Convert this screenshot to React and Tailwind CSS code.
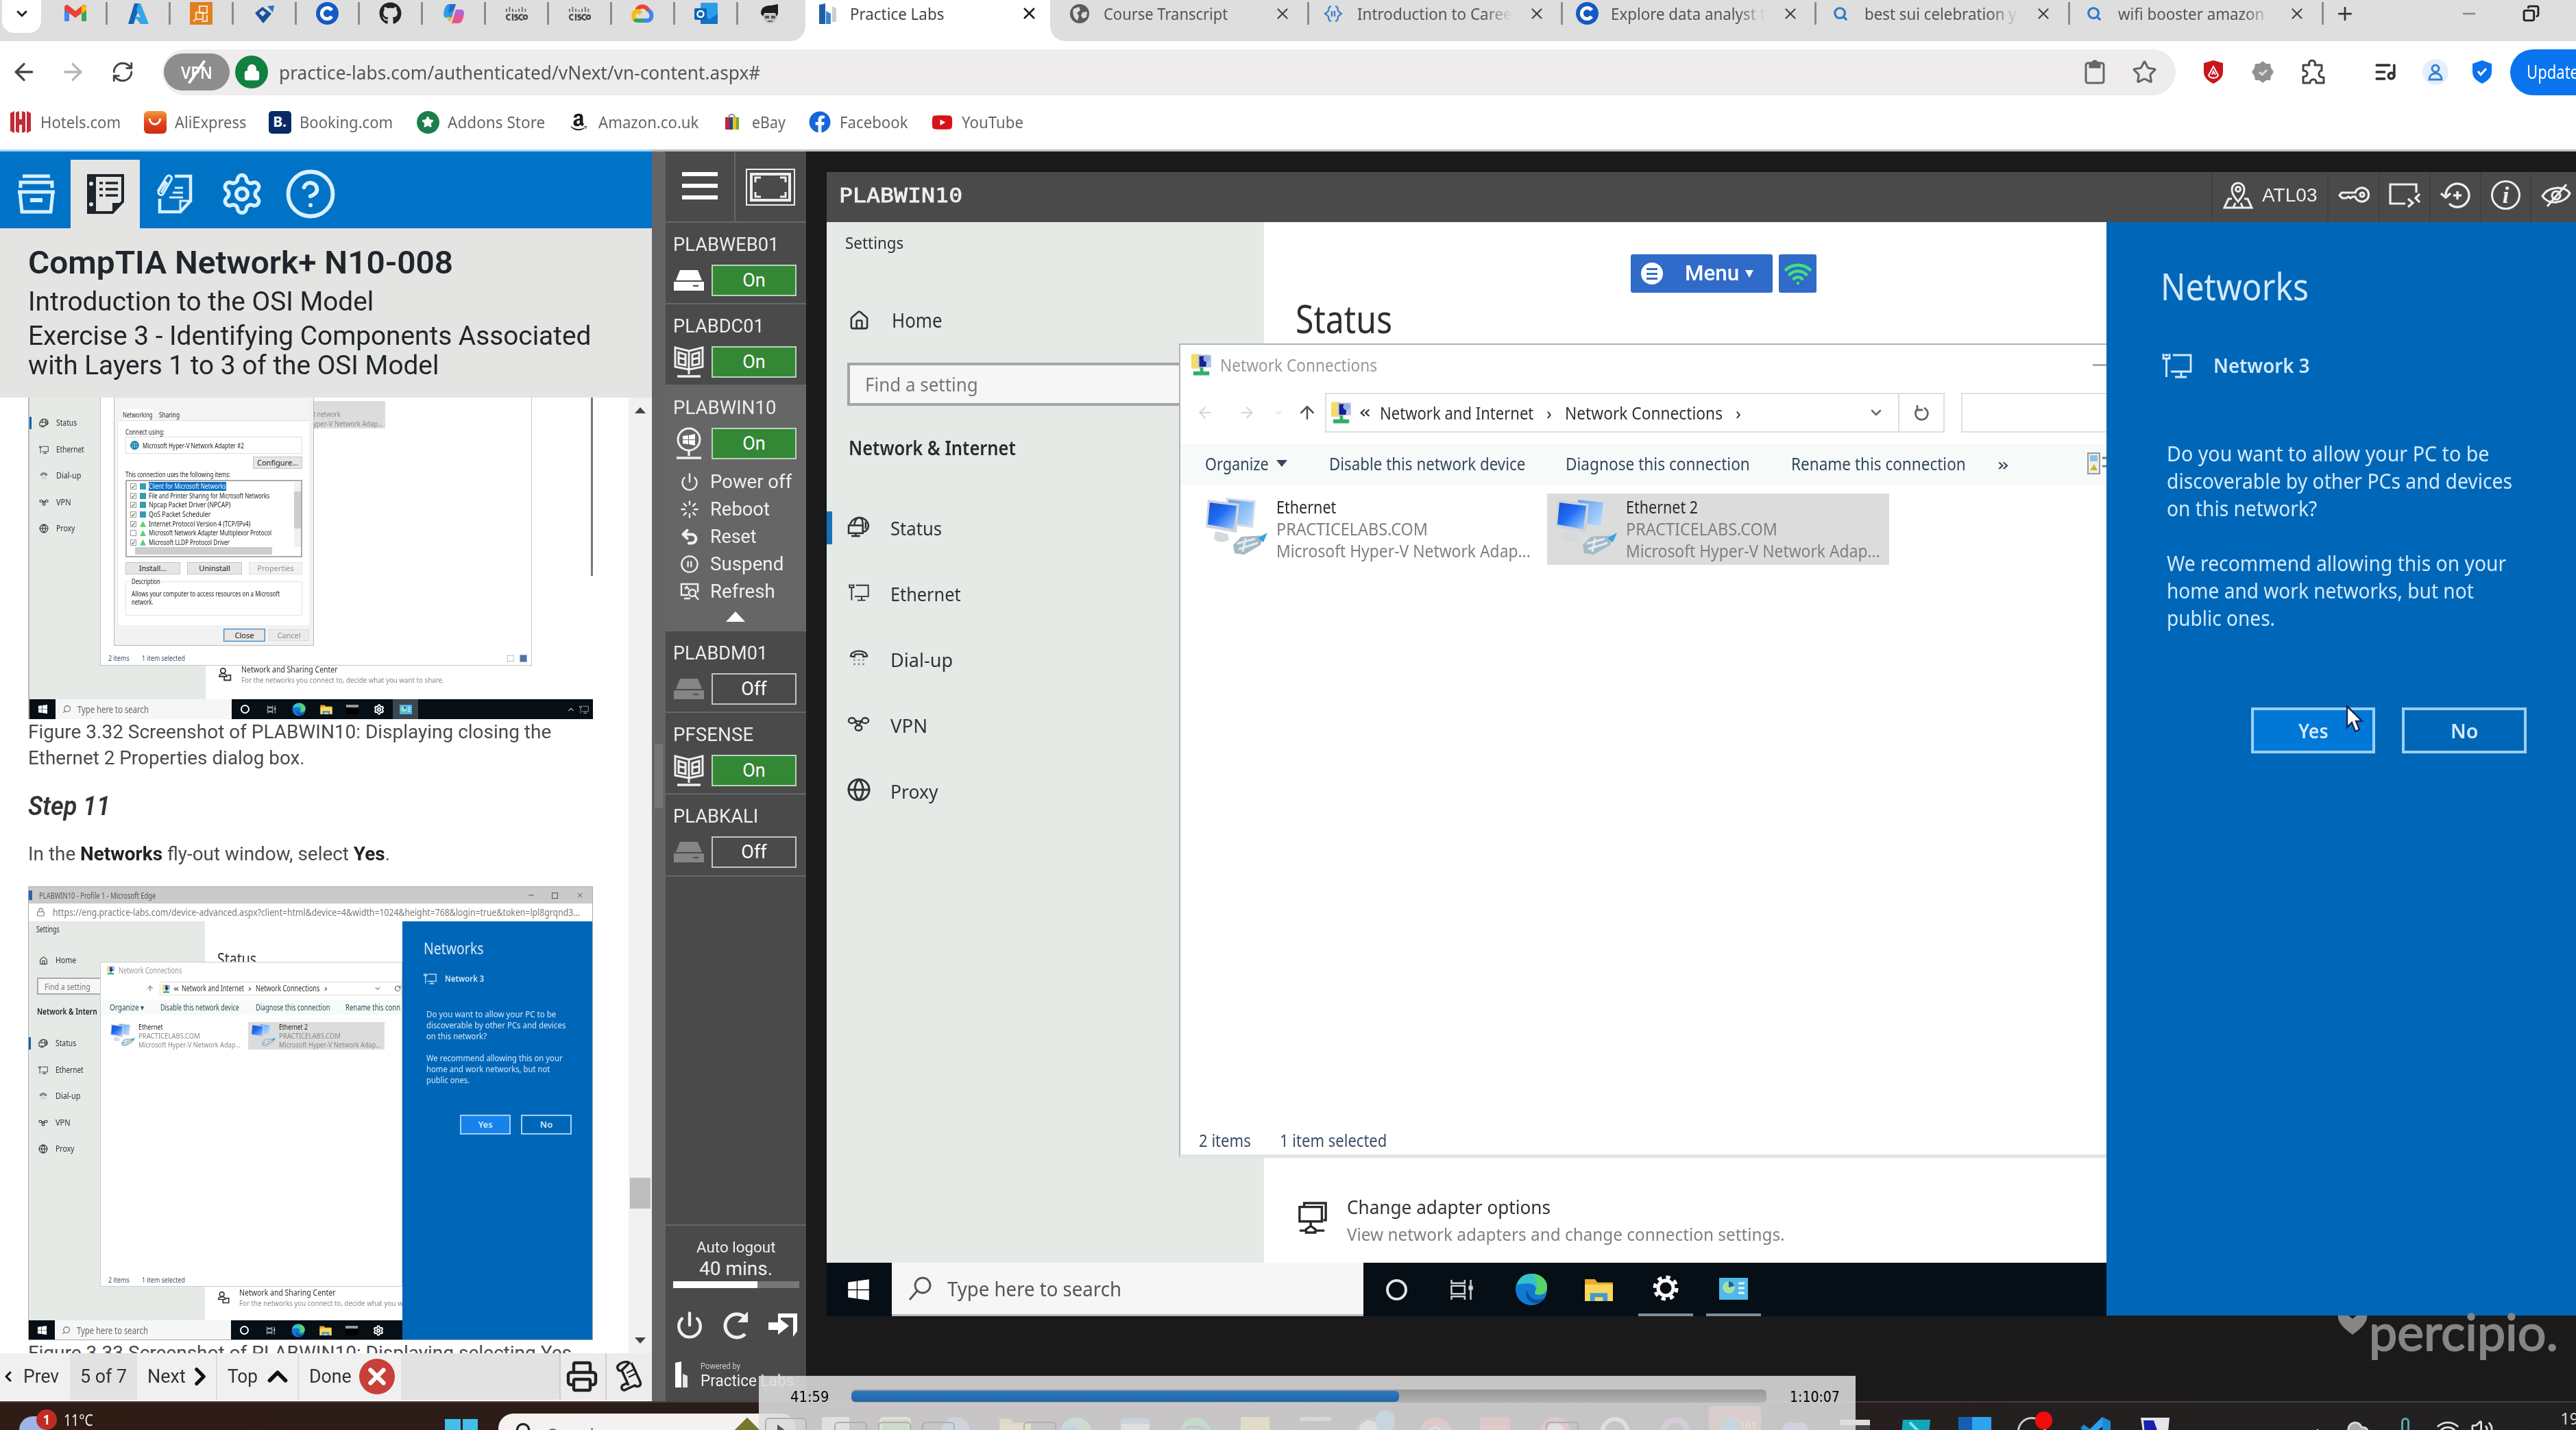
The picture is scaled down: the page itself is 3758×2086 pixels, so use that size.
import React, { useLayoutEffect, useRef, useState } from "react";
import {
  ArrowLeft, ArrowRight, ArrowUp, ChevronDown, ChevronLeft, ChevronRight, ChevronUp, X, Plus, Search, Star,
  ListMusic, House, Globe, Printer, Power, Wifi, Settings, Minus, CircleHelp, Cloud,
  Volume2, Undo2, Loader, CirclePause, Lock, Copy, RotateCw, RefreshCw,
} from "lucide-react";
import { FaGithub, FaFacebook, FaYoutube, FaAmazon, FaSpotify, FaDiscord, FaWindows } from "react-icons/fa";

/* Single line of text condensed or widened to an exact width. */
function T({ w, className = "", children }) {
  const ref = useRef(null);
  const [s, setS] = useState(1);
  useLayoutEffect(() => {
    if (ref.current) setS(w / ref.current.offsetWidth);
  }, [w]);
  return (
    <span className={"inline-block shrink-0 whitespace-nowrap text-left " + className} style={{ width: w }}>
      <span ref={ref} className="inline-block origin-left" style={{ transform: `scaleX(${s})` }}>
        {children}
      </span>
    </span>
  );
}

const Box = ({ className = "", children }) => (
  <div className={"flex shrink-0 items-center justify-center " + className}>{children}</div>
);

/* ---------- brand icons ---------- */
const Gmail = () => (
  <svg className="h-[28px] w-[32px]" viewBox="0 0 32 26">
    <path d="M0 3v21h7V11z" fill="#4285f4" />
    <path d="M32 3v21h-7V11z" fill="#34a853" />
    <path d="M0 4c0-4 4-5 6-3l10 8L26 1c2-2 6-1 6 3v3L16 19 0 7z" fill="#ea4335" />
    <path d="M25 2c3-3 7-1 7 2v4l-7 5z" fill="#fbbc04" />
  </svg>
);
const Azure = () => (
  <svg className="h-[32px] w-[32px]" viewBox="0 0 32 32">
    <path d="M10 1h9L9 31H1z" fill="#1467b3" />
    <path d="M19 1h-3L13 11l6 10-9-1 9 11h12z" fill="#33a5e8" />
  </svg>
);
const Aws = () => (
  <svg className="h-[33px] w-[33px]" viewBox="0 0 33 33">
    <rect width="33" height="33" fill="#e0801f" />
    <g fill="none" stroke="#fbe0bd" strokeWidth="2.2">
      <path d="M14 6h11v10H14zM9 15h10v10H9z" /><path d="M5 28l5-4M17 28h8v-9" />
    </g>
  </svg>
);
const Diamond = () => (
  <svg className="h-[30px] w-[32px]" viewBox="0 0 32 30">
    <path d="M13 5L2 14l12 15 12-14z" fill="#1b4f99" /><path d="M13 10l5 4-5 5-5-5z" fill="#cfdcf0" />
    <path d="M20 4l10-1-2 10z" fill="#2c6fc7" />
  </svg>
);
const Coursera = () => (
  <svg className="h-[33px] w-[33px]" viewBox="0 0 33 33">
    <circle cx="16.500" cy="16.500" r="16.500" fill="#1559c4" />
    <path d="M23 12a8 8 0 1 0 0 9" fill="none" stroke="#fff" strokeWidth="5" />
  </svg>
);
const Copilot = () => (
  <svg className="h-[32px] w-[32px]" viewBox="0 0 32 32">
    <path d="M10 2h9l-6 20H6C0 22 1 16 2 11 4 4 6 2 10 2z" fill="#2f9be0" />
    <path d="M10 2h9l-3 9-8 4z" fill="#2a6cc9" />
    <path d="M22 30h-9l6-20h7c6 0 5 6 4 11-2 7-4 9-8 9z" fill="#e8558c" />
    <path d="M7 20l6 2-1 5c-3 2-6-3-5-7z" fill="#f4b92f" />
    <path d="M19 10h7c5 0 5 4 4 8l-9 1z" fill="#b064d8" />
  </svg>
);
const Cisco = () => (
  <svg className="h-[24px] w-[33px]" viewBox="0 0 36 26">
    <path d="M2 5v5M7 2v8M12 5v5M17 7v3M22 5v5M27 2v8M32 5v5" stroke="#666" strokeWidth="2" />
    <g fill="none" stroke="#4a4a4a" strokeWidth="2.600">
      <path d="M8 15a4 4 0 1 0 0 7M12 13v11M20 15c-6-1-5 3-2 3.500s3 5-3 4M28 15a4 4 0 1 0 0 7" /><circle cx="32" cy="18.500" r="3" />
    </g>
  </svg>
);
const GCloud = () => (
  <svg className="h-[28px] w-[33px]" viewBox="0 0 33 28">
    <g fill="none" strokeWidth="6">
      <path d="M8 9C12 1 22 2 25 10" stroke="#ea4335" /><path d="M25 9c6 3 6 14-1 15h-7" stroke="#4285f4" />
      <path d="M17 24H9c-2 0-4-1-5-3" stroke="#34a853" /><path d="M5 22C1 17 4 10 10 10l4 4" stroke="#fbbc04" />
    </g>
  </svg>
);
const Outlook = () => (
  <svg className="h-[31px] w-[34px]" viewBox="0 0 34 31">
    <rect x="9" width="25" height="31" rx="2" fill="#28a0e8" /><path d="M9 16l13 8 12-8v15H9z" fill="#1272c8" />
    <rect y="8" width="18" height="17" rx="2" fill="#0f63b5" /><circle cx="9" cy="16.500" r="4.500" fill="none" stroke="#fff" strokeWidth="2.500" />
  </svg>
);
const Cap = () => (
  <svg className="h-[30px] w-[30px]" viewBox="0 0 30 30">
    <path d="M5 15h21c0 9-4 14-10.500 14S5 24 5 15z" fill="#c4c4c4" />
    <path d="M2 15C2 5 9 3 17 3l10-2v14l-2 4-2-5H7l-2 5z" fill="#1d1d1d" />
    <path d="M8 18h6v4H8zM17 18h6v4h-6z" fill="#555" /><path d="M12 26h7" stroke="#666" strokeWidth="2" />
  </svg>
);
const PLogo = () => (
  <svg className="h-[32px] w-[30px]" viewBox="0 0 30 32">
    <path d="M2 3l9-2v30H2z" fill="#1f5fa8" /><path d="M12 12l7 4v15h-7z" fill="#3a84cf" /><path d="M21 5l6 3v20h-6z" fill="#c9ced4" />
  </svg>
);
const GlobeDark = () => (
  <svg className="h-[28px] w-[28px]" viewBox="0 0 28 28">
    <circle cx="14" cy="14" r="14" fill="#5b5b5b" /><path d="M5 7l8-3 2 5-5 4 3 4-2 7c-5-3-8-9-6-17zM18 12l7-1-1 8-5 2-3-4z" fill="#dedede" />
  </svg>
);
const Brackets = () => (
  <svg className="h-[26px] w-[28px]" viewBox="0 0 28 26" fill="none" stroke="#4a84c9" strokeWidth="2.500">
    <path d="M11 2C5 3 9 8 6 10l-4 3 4 3c3 2-1 7 5 8M17 2c6 1 2 6 5 8l4 3-4 3c-3 2 1 7-5 8M12 9v8M16 9v8" />
  </svg>
);

/* ---------- browser chrome ---------- */
function Tab({ icon, label, w }) {
  return (
    <div className="flex h-[33px] w-[370px] shrink-0 items-center border-r-[3px] border-[#8b8b8b]">
      <Box className="w-[70px]">{icon}</Box>
      <div className="flex-1 [mask-image:linear-gradient(to_right,black_82%,transparent)]">
        <T w={w} className="text-[24px] leading-[40px] text-[#555]">{label}</T>
      </div>
      <Box className="w-[72px]"><X className="size-[26px] text-[#444]" strokeWidth={2} /></Box>
    </div>
  );
}

function TabStrip() {
  const pinned = [<Gmail />, <Azure />, <Aws />, <Diamond />, <Coursera />, <FaGithub className="size-[33px] text-[#222]" />, <Copilot />, <Cisco />, <Cisco />, <GCloud />, <Outlook />, <Cap />];
  return (
    <div className="flex h-[60px] shrink-0 bg-white">
      <div className="flex h-[60px] w-[1175px] shrink-0 items-start rounded-br-[22px] bg-[#dedede] pl-[3px]">
        <Box className="mr-[5px] h-[48px] w-[57px] rounded-b-[18px] bg-white pb-[8px]"><ChevronDown className="size-[24px] text-[#222]" strokeWidth={3} /></Box>
        {pinned.map((p, i) => (
          <div key={i} className="flex h-[39px] items-center">
            <Box className={i < 11 ? "h-[33px] w-[92px] border-r-[3px] border-[#8b8b8b]" : "h-[33px] w-[92px]"}>{p}</Box>
          </div>
        ))}
      </div>
      <div className="flex h-[39px] w-[357px] shrink-0 items-center">
        <Box className="w-[65px]"><PLogo /></Box>
        <T w={137} className="text-[24px] leading-[40px] text-[#444]">Practice Labs</T>
        <div className="flex-1" />
        <Box className="w-[62px]"><X className="size-[27px] text-[#222]" strokeWidth={2.300} /></Box>
      </div>
      <div className="flex h-[60px] flex-1 items-start rounded-bl-[22px] bg-[#dedede] pl-[8px]">
        <div className="flex h-[39px] items-center">
          <Tab icon={<GlobeDark />} label="Course Transcript" w={181} />
          <Tab icon={<Brackets />} label="Introduction to Caree" w={226} />
          <Tab icon={<Coursera />} label="Explore data analyst t" w={226} />
          <Tab icon={<Search className="size-[22px] text-[#2d7cc9]" strokeWidth={3.500} />} label="best sui celebration y" w={222} />
          <Tab icon={<Search className="size-[22px] text-[#2d7cc9]" strokeWidth={3.500} />} label="wifi booster amazon" w={213} />
          <Box className="w-[62px]"><Plus className="size-[30px] text-[#333]" strokeWidth={2.200} /></Box>
          <Box className="ml-[110px] w-[80px]"><Minus className="size-[28px] text-[#888]" /></Box>
          <Box className="ml-[4px] w-[92px]"><Copy className="size-[25px] -scale-x-100 text-[#222]" strokeWidth={2.800} /></Box>
        </div>
      </div>
    </div>
  );
}

function Toolbar() {
  return (
    <div className="flex h-[90px] shrink-0 items-center">
      <Box className="w-[69px]"><ArrowLeft className="size-[40px] text-[#444]" /></Box>
      <Box className="w-[73px]"><ArrowRight className="size-[40px] text-[#b5b5b5]" /></Box>
      <Box className="w-[73px]"><RefreshCw className="size-[34px] text-[#444]" /></Box>
      <div className="ml-[22px] flex h-[67px] w-[2937px] shrink-0 items-center rounded-full bg-[#eeecec]">
        <Box className="ml-[2px] h-[54px] w-[96px] rounded-full bg-[#8d8d8d]">
          <div className="relative">
            <T w={46} className="text-[25px] font-semibold leading-[40px] text-white">VPN</T>
            <div className="absolute left-[21px] top-0 h-[40px] w-[4px] rotate-[35deg] bg-white" />
          </div>
        </Box>
        <Box className="ml-[8px] size-[48px] rounded-full bg-[#12803f]"><Lock className="size-[25px] fill-white text-white" strokeWidth={2.500} /></Box>
        <T w={702} className="ml-[16px] text-[28px] leading-[44px] text-[#555]">practice-labs.com/authenticated/vNext/vn-content.aspx#</T>
        <div className="flex-1" />
        <Box className="w-[72px]">
          <svg className="h-[36px] w-[30px]" viewBox="0 0 30 36" fill="none" stroke="#666" strokeWidth="3"><rect x="2" y="5" width="26" height="29" rx="3" /><path d="M8 5h4c0-4 6-4 6 0h4v6H8z" fill="#666" /></svg>
        </Box>
        <Box className="mr-[10px] w-[72px]"><Star className="size-[37px] text-[#666]" /></Box>
      </div>
      <Box className="ml-[19px] w-[72px]">
        <svg className="h-[34px] w-[30px]" viewBox="0 0 30 34"><path d="M15 0l14 4v13c0 8-6 13-14 17C7 30 1 25 1 17V4z" fill="#c8171c" /><path d="M8 22l7-13 7 13c-2 5-11 5-14 0zM13 21l2-5 3 5" fill="none" stroke="#fff" strokeWidth="2" /></svg>
      </Box>
      <Box className="w-[72px]">
        <svg className="size-[32px]" viewBox="0 0 32 32"><path d="M16 0l5 4 6 0 1 6 4 6-4 6-1 6-6 0-5 4-5-4-6 0-1-6-4-6 4-6 1-6 6 0z" fill="#919191" /><path d="M11 16l4 4 7-7" fill="none" stroke="#ddd" strokeWidth="3" /></svg>
      </Box>
      <Box className="w-[76px]">
        <svg className="h-[38px] w-[36px]" viewBox="0 0 36 38" fill="none" stroke="#444" strokeWidth="3" strokeLinejoin="round"><path d="M3 9h9c-3-9 11-9 8 0h10v8c-2 0-4 2-4 5s2 5 7 5v8H22c1-7-9-7-9 0H3v-9c8 0 8-9 0-9z" /></svg>
      </Box>
      <div className="ml-[14px] h-[32px] w-[2px] bg-[#ccc]" />
      <Box className="ml-[14px] w-[78px]"><ListMusic className="size-[34px] text-[#333]" strokeWidth={2.600} /></Box>
      <Box className="w-[68px]">
        <Box className="size-[38px] rounded-full bg-[#e3effc]"><svg className="size-[28px]" viewBox="0 0 28 28" fill="none" stroke="#3a7fd6" strokeWidth="3"><circle cx="14" cy="9" r="5" /><path d="M5 25c0-12 18-12 18 0z" /></svg></Box>
      </Box>
      <Box className="w-[68px]">
        <svg className="h-[34px] w-[30px]" viewBox="0 0 30 34"><path d="M15 0l14 5v12c0 8-6 13-14 17C7 30 1 25 1 17V5z" fill="#0b72ee" /><path d="M9 16l4 5 8-9" fill="none" stroke="#fff" strokeWidth="3" /></svg>
      </Box>
      <div className="ml-[7px] flex h-[67px] flex-1 items-center rounded-l-[34px] bg-[#0a74f0] pl-[24px]">
        <T w={76} className="text-[27px] leading-[40px] text-white">Update</T>
      </div>
    </div>
  );
}

function Mark({ icon, iw, label, w }) {
  return (
    <div className="flex items-center">
      <Box className={iw}>{icon}</Box>
      <T w={w} className="text-[24px] leading-[40px] text-[#666]">{label}</T>
    </div>
  );
}
function Bookmarks() {
  return (
    <div className="mb-[12px] flex h-[56px] shrink-0 items-center">
      <Mark iw="ml-[1px] w-[58px]" label="Hotels.com" w={117} icon={<svg className="h-[32px] w-[30px]" viewBox="0 0 30 32" fill="#c22a36"><path d="M0 3l6-3v32l-6-3zM8 2l5-2v12h4V0l5 2v28l-5 2V20h-4v12l-5-2zM24 0l6 3v26l-6 3z" /></svg>} />
      <Mark iw="ml-[21px] w-[58px]" label="AliExpress" w={104} icon={<Box className="size-[33px] rounded-[6px] bg-linear-to-b from-[#f29a3a] via-[#e0451f] to-[#cf2a10]"><svg className="size-[22px]" viewBox="0 0 22 22"><path d="M3 6c2 11 14 11 16 0" fill="none" stroke="#fff" strokeWidth="3" /></svg></Box>} />
      <Mark iw="ml-[20px] w-[58px]" label="Booking.com" w={136} icon={<Box className="size-[33px] rounded-[5px] bg-[#0a2a66] text-[21px] font-bold text-white">B.</Box>} />
      <Mark iw="ml-[22px] w-[58px]" label="Addons Store" w={142} icon={<Box className="size-[33px] rounded-full bg-[#1b7f4c]"><Star className="size-[18px] fill-white text-white" /></Box>} />
      <Mark iw="ml-[20px] w-[58px]" label="Amazon.co.uk" w={146} icon={<FaAmazon className="size-[28px] text-[#1b1b1b]" />} />
      <Mark iw="ml-[20px] w-[58px]" label="eBay" w={49} icon={<svg className="h-[26px] w-[22px]" viewBox="0 0 22 26"><path d="M1 6h6v18H1z" fill="#c9243a" /><path d="M7 6h5v18H7z" fill="#27489a" /><path d="M12 6h5v18h-5z" fill="#e7c51c" /><path d="M17 6h4v18h-4z" fill="#7aa72f" /><path d="M6 7c0-7 9-7 9 0" fill="none" stroke="#888" strokeWidth="2" /></svg>} />
      <Mark iw="ml-[21px] w-[58px]" label="Facebook" w={100} icon={<FaFacebook className="size-[32px] text-[#1566dd]" />} />
      <Mark iw="ml-[20px] w-[58px]" label="YouTube" w={90} icon={<FaYoutube className="size-[31px] text-[#d8121a]" />} />
    </div>
  );
}

/* ---------- thumbnails in the lab guide ---------- */
const Pc = ({ className = "" }) => (
  <svg className={className} viewBox="0 0 90 88">
    <defs>
      <linearGradient id="scr" x1="0" y1="0" x2="1" y2="1"><stop offset="0" stopColor="#1a4fd0" /><stop offset=".45" stopColor="#1f6df2" /><stop offset="1" stopColor="#a9d4ff" /></linearGradient>
      <linearGradient id="scr2" x1="0" y1="0" x2="1" y2="1"><stop offset="0" stopColor="#5c9df0" /><stop offset="1" stopColor="#bfe0ff" /></linearGradient>
    </defs>
    <path d="M29 1l44 4-4 40-34-4z" fill="#d9dde2" /><path d="M33 4l37 4-4 34-30-4z" fill="url(#scr2)" />
    <path d="M3 4l46 6-4 42-45-8z" fill="#cfd4da" /><path d="M6 8l39 5-4 34-38-7z" fill="url(#scr)" />
    <path d="M14 50l18 4 2 8c-6 6-20 4-22-2z" fill="#d6d9da" />
    <path d="M40 70l12-12 32-2-4 14-24 14-14-2z" fill="#a5b9c6" /><path d="M46 68l26-7M48 76l28-9M58 60l-4 20" stroke="#e3ebf0" strokeWidth="3" /><path d="M76 60l14-8-6 14z" fill="#2fa6e0" />
  </svg>
);
const NetIcon = ({ className = "" }) => (
  <svg className={className} viewBox="0 0 32 34">
    <rect x="1" y="1" width="15" height="22" fill="#f1dc6d" /><path d="M11 2h20v19H11z" fill="#b9c4e4" /><path d="M13 4h12l-2 16H13z" fill="#16208f" /><circle cx="24" cy="8" r="5" fill="#8fb0e8" />
    <path d="M14 21h5v6h9v6H4v-6h10z" fill="#2fae6b" />
  </svg>
);
const MonitorPlug = ({ className = "" }) => (
  <svg className={className} viewBox="0 0 44 38" fill="none" stroke="currentColor" strokeWidth="2.800">
    <path d="M16 4h26v24H13M28 28v7M19 36h17M2 2v7h9V2M6.500 9v27M4 4h5" />
  </svg>
);
const StatusGlobe = ({ className = "" }) => (
  <svg className={className} viewBox="0 0 32 30" fill="none" stroke="currentColor" strokeWidth="2.500">
    <path d="M4 12C8-2 28-1 30 13c0 5-3 8-7 9M10 12c1-6 3-10 7-10M22 12c0-6-2-10-5-10M26 8v10" /><rect x="2" y="13" width="20" height="11" /><path d="M12 24v4M6 28h12" />
  </svg>
);
const DialUp = ({ className = "" }) => (
  <svg className={className} viewBox="0 0 32 28" fill="none" stroke="currentColor" strokeWidth="2.500">
    <path d="M3 11C4 0 28 0 29 11l-6 1-1-4H10l-1 4z" /><path d="M9 16v2M16 16v2M23 16v2M9 22v3M16 22v3M23 22v3" opacity=".6" />
  </svg>
);
const VpnIcon = ({ className = "" }) => (
  <svg className={className} viewBox="0 0 34 22" fill="none" stroke="currentColor" strokeWidth="2.500">
    <ellipse cx="7" cy="6" rx="5" ry="4" /><ellipse cx="27" cy="6" rx="5" ry="4" /><ellipse cx="17" cy="17" rx="5" ry="4" /><path d="M12 6c3 0 5 3 9 0M22 7l-5 6M12 8l4 5" />
  </svg>
);
const EdgeIcon = ({ className = "" }) => (
  <svg className={className} viewBox="0 0 50 50">
    <circle cx="25" cy="25" r="24" fill="#1279d0" /><path d="M2 20C6 6 14 1 25 1c16 0 24 11 24 20 0 8-6 12-12 12-5 0-8-2-6-5 3-6-1-12-10-12S5 16 2 20z" fill="#35c1c9" />
    <path d="M28 1c14 2 21 11 21 20 0 8-6 12-12 12-5 0-8-2-6-5C38 18 30 6 28 1z" fill="#5bd36a" /><path d="M18 26c-4 10 4 21 16 20 5-1 9-4 12-8-12 5-20 2-24-4-2-3-3-6-4-8z" fill="#0b4f9e" />
  </svg>
);
const FolderIcon = ({ className = "" }) => (
  <svg className={className} viewBox="0 0 44 36">
    <path d="M1 2h15l4 5h23v28H1z" fill="#e8a92c" /><path d="M1 10h42v25H1z" fill="#fbd65c" /><path d="M9 35V23h26v12h-7v-6H16v6z" fill="#3c9bd3" />
  </svg>
);
const Panel = ({ className = "" }) => (
  <svg className={className} viewBox="0 0 42 32"><rect width="42" height="32" fill="#4fb9ec" /><circle cx="14" cy="14" r="9" fill="#a8e0a0" /><path d="M14 14V5a9 9 0 0 1 8 7z" fill="#1d5c9c" /><path d="M28 8h9M28 15h9M28 22h9" stroke="#e4f6ff" strokeWidth="3" /></svg>
);

function MiniItem({ icon, label, w, h, active }) {
  return (
    <div className={"flex shrink-0 items-center text-[#333] " + h}>
      <div className={active ? "h-[18px] w-[3px] bg-[#0f62ad]" : "h-[18px] w-[3px]"} />
      <Box className="w-[36px]">{icon}</Box>
      <T w={w} className="text-[12px] leading-[18px]">{label}</T>
    </div>
  );
}
const MiniItems = ({ h }) => (
  <>
    <MiniItem h={h} active label="Status" w={30} icon={<StatusGlobe className="size-[14px]" />} />
    <MiniItem h={h} label="Ethernet" w={41} icon={<MonitorPlug className="size-[14px]" />} />
    <MiniItem h={h} label="Dial-up" w={36} icon={<DialUp className="size-[12px]" />} />
    <MiniItem h={h} label="VPN" w={22} icon={<VpnIcon className="size-[14px]" />} />
    <MiniItem h={h} label="Proxy" w={27} icon={<Globe className="size-[14px]" />} />
  </>
);
function MiniTaskbar({ tray }) {
  return (
    <div className="flex h-[29px] shrink-0 items-center bg-[#060e16]">
      <Box className="w-[38px]"><FaWindows className="size-[15px] text-white" /></Box>
      <div className="flex h-[29px] w-[257px] items-center bg-[#f6f6f6]">
        <Box className="w-[32px]"><Search className="size-[13px] -scale-x-100 text-[#666]" /></Box>
        <T w={104} className="text-[14px] leading-[20px] text-[#666]">Type here to search</T>
      </div>
      <Box className="w-[38px]"><div className="size-[13px] rounded-full border-2 border-white" /></Box>
      <Box className="w-[39px]"><TaskView className="h-[12px] w-[14px]" /></Box>
      <Box className="w-[42px]"><EdgeIcon className="size-[20px]" /></Box>
      <Box className="w-[38px]"><FolderIcon className="h-[16px] w-[18px]" /></Box>
      <Box className="w-[38px]"><div className="h-[14px] w-[18px] border-t-4 border-[#999] bg-black" /></Box>
      <Box className="w-[40px]"><Settings className="size-[16px] text-white" strokeWidth={3} /></Box>
      {tray && (
        <>
          <Box className="h-[29px] w-[37px] bg-[#3b464f]"><Panel className="h-[14px] w-[18px]" /></Box>
          <div className="flex-1" />
          <ChevronUp className="size-[14px] text-[#aaa]" />
          <MonitorPlug className="ml-[5px] mr-[6px] size-[14px] text-[#aaa]" />
        </>
      )}
    </div>
  );
}
const TaskView = ({ className = "" }) => (
  <svg className={className} viewBox="0 0 34 32" fill="none" stroke="#c9ced3" strokeWidth="2.600"><path d="M2 1v5h20V1M2 31v-5h20v5" /><rect x="2" y="10" width="20" height="12" /><path d="M31 1v30" /><path d="M29 11h4v4h-4z" fill="#fff" /></svg>
);

const protocols = [
  ["Client for Microsoft Networks", 113], ["File and Printer Sharing for Microsoft Networks", 176], ["Npcap Packet Driver (NPCAP)", 119],
  ["QoS Packet Scheduler", 90], ["Internet Protocol Version 4 (TCP/IPv4)", 148], ["Microsoft Network Adapter Multiplexor Protocol", 179], ["Microsoft LLDP Protocol Driver", 118],
];
const miniBtn = "flex shrink-0 items-center justify-center border border-[#c4c4c4] bg-[#e6e6e6] text-[11px] leading-[14px] text-[#222] ";

function ShotOne() {
  return (
    <div className="relative flex h-[469px] w-[824px] shrink-0 flex-col overflow-hidden border-l-2 border-[#b5b9b6] bg-white">
      <div className="flex h-[440px] shrink-0">
        <div className="w-[257px] bg-[#e5eae6] pt-[18px]"><MiniItems h="h-[38.500px]" /></div>
        <div className="flex flex-1 flex-col justify-end pb-[21px] pl-[18px]">
          <div className="flex items-center gap-[12px]">
            <NodeIcon className="size-[22px] text-[#333]" />
            <div className="flex flex-col">
              <T w={141} className="text-[12px] leading-[15px] text-[#333]">Network and Sharing Center</T>
              <T w={296} className="text-[11px] leading-[15px] text-[#888]">For the networks you connect to, decide what you want to share.</T>
            </div>
          </div>
        </div>
      </div>
      <MiniTaskbar tray />
      <div className="absolute right-0 top-0 h-[260px] w-[3px] bg-[#777]" />
      <div className="absolute left-[103px] top-0 flex h-[391px] w-[630px] flex-col border border-t-0 border-[#c5c5c5] bg-white">
        <div className="ml-[310px] mt-[5px] h-[40px] w-[105px] bg-[#dcdcdc] pt-[12px] text-[11px] leading-[14px] text-[#888]">
          <div className="flex flex-col">
            <T w={40}>t network</T>
            <T w={102}>yper-V Network Adap...</T>
          </div>
        </div>
        <div className="flex-1" />
        <div className="flex h-[20px] items-center gap-[18px] pl-[11px] text-[#3c4d66]">
          <T w={31} className="text-[11px] leading-[16px]">2 items</T>
          <T w={63} className="text-[11px] leading-[16px]">1 item selected</T>
          <div className="flex-1" />
          <div className="h-[9px] w-[10px] border border-dotted border-[#888]" />
          <div className="-ml-[10px] mr-[6px] h-[11px] w-[11px] border border-[#8cb4e0] bg-[#51749c]" />
        </div>
      </div>
      <div className="absolute left-[123px] top-0 flex h-[362px] w-[292px] flex-col border border-t-0 border-[#b9b9b9] bg-[#f2f2f2]">
        <div className="mx-[6px] flex h-[332px] flex-col bg-white px-[10px]">
          <div className="-mx-[10px] flex h-[34px] items-end gap-[9px] border-b border-[#ddd] bg-[#f4f4f4] px-[6px]">
            <T w={44} className="bg-white text-[11px] leading-[16px] text-[#222]">Networking</T>
            <T w={30} className="text-[11px] leading-[16px] text-[#222]">Sharing</T>
          </div>
          <T w={57} className="mt-[8px] text-[11px] leading-[15px] text-[#222]">Connect using:</T>
          <div className="flex h-[25px] items-center border border-[#ddd] text-[#222]">
            <Box className="w-[24px]"><Globe className="size-[13px] text-[#1c86ad]" strokeWidth={4} /></Box>
            <T w={148} className="text-[11px] leading-[16px]">Microsoft Hyper-V Network Adapter #2</T>
          </div>
          <div className={miniBtn + "mt-[4px] h-[18px] w-[72px] self-end"}>Configure...</div>
          <T w={153} className="text-[11px] leading-[16px] text-[#222]">This connection uses the following items:</T>
          <div className="flex h-[113px] flex-col border-2 border-[#aaa] pt-[1px]">
            {protocols.map(([label, w], i) => (
              <div key={label} className="flex h-[13.600px] shrink-0 items-center text-[#222]">
                <Box className="mx-[5px] size-[9px] border border-[#999] text-[9px] leading-[9px]">{i === 5 ? "" : "✓"}</Box>
                <div className={i < 4 ? "mr-[4px] size-[9px] bg-[#3a9ab4]" : "mr-[4px] h-[9px] w-[9px] bg-[#5cd06c] [clip-path:polygon(50%_0,100%_100%,0_100%)]"} />
                <T w={w} className={i === 0 ? "bg-[#0f70c4] text-[10px] leading-[13px] text-white" : "text-[10px] leading-[13px]"}>{label}</T>
                <div className="flex-1" />
                <div className={i > 0 && i < 5 ? "h-[13.600px] w-[10px] bg-[#cdcdcd]" : "h-[13.600px] w-[10px] bg-[#f0f0f0]"} />
              </div>
            ))}
            <div className="mx-[12px] h-[11px] w-[200px] bg-[#cdcdcd]" />
          </div>
          <div className="mt-[7px] flex justify-between">
            <div className={miniBtn + "h-[18px] w-[80px]"}>Install...</div>
            <div className={miniBtn + "h-[18px] w-[80px]"}>Uninstall</div>
            <div className={miniBtn + "h-[18px] w-[78px] opacity-50"}>Properties</div>
          </div>
          <div className="mt-[10px] flex h-[50px] flex-col border border-[#e2e2e2] px-[8px]">
            <T w={42} className="-mt-[8px] bg-white text-[10px] leading-[14px] text-[#222]">Description</T>
            <T w={216} className="mt-[5px] text-[10px] leading-[12px] text-[#222]">Allows your computer to access resources on a Microsoft</T>
            <T w={32} className="text-[10px] leading-[12px] text-[#222]">network.</T>
          </div>
        </div>
        <div className="flex justify-end gap-[6px] pr-[6px] pt-[6px]">
          <div className={miniBtn + "h-[17px] w-[59px] outline outline-[#2a8ad4]"}>Close</div>
          <div className={miniBtn + "h-[17px] w-[59px] opacity-50"}>Cancel</div>
        </div>
      </div>
    </div>
  );
}
const NodeIcon = ({ className = "" }) => (
  <svg className={className} viewBox="0 0 24 24" fill="none" stroke="currentColor" strokeWidth="2"><circle cx="8" cy="6" r="4" /><path d="M2 15c0-6 12-6 12 0zM10 15v6h10v-8h-5" /></svg>
);

function MiniConn({ label, sel }) {
  return (
    <div className={sel ? "flex h-[40px] w-[199px] bg-[#dcdcdc] pl-[4px]" : "flex h-[40px] w-[199px] pl-[4px]"}>
      <Pc className="mr-[5px] h-[38px] w-[36px]" />
      <div className="flex flex-col text-[#888]">
        <T w={sel ? 42 : 36} className="text-[11px] leading-[13px] text-[#222]">{label}</T>
        <T w={90} className="text-[11px] leading-[13px]">PRACTICELABS.COM</T>
        <T w={149} className="text-[11px] leading-[13px]">Microsoft Hyper-V Network Adap...</T>
      </div>
    </div>
  );
}
function ShotTwo() {
  return (
    <div className="relative flex h-[662px] w-[824px] shrink-0 flex-col overflow-hidden border border-[#aaa] bg-white">
      <div className="flex h-[24px] shrink-0 items-center bg-[#cacaca]">
        <div className="mr-[10px] h-[14px] w-[5px] bg-[#2b62a8]" />
        <T w={170} className="text-[13px] leading-[20px] text-[#555]">PLABWIN10 - Profile 1 - Microsoft Edge</T>
        <div className="flex-1" />
        <Minus className="mr-[24px] size-[12px] text-[#555]" /><div className="mr-[26px] size-[9px] border border-[#555]" /><X className="mr-[12px] size-[12px] text-[#555]" />
      </div>
      <div className="flex h-[26px] shrink-0 items-center pb-[2px]">
        <Box className="w-[35px]"><Lock className="size-[13px] text-[#777]" /></Box>
        <T w={769} className="text-[15px] leading-[22px] text-[#777]">https://eng.practice-labs.com/device-advanced.aspx?client=html&amp;device=4&amp;width=1024&amp;height=768&amp;login=true&amp;token=lpl8grqnd3...</T>
      </div>
      <div className="flex h-[582px] shrink-0">
        <div className="flex w-[257px] flex-col bg-[#e5eae6] pt-[3px]">
          <T w={34} className="ml-[11px] text-[12px] leading-[18px] text-[#333]">Settings</T>
          <div className="mt-[26px]"><MiniItem h="h-[20px]" label="Home" w={30} icon={<House className="size-[13px]" />} /></div>
          <div className="ml-[12px] mt-[15px] flex h-[25px] items-center border-2 border-[#aaa] bg-[#f6f6f6] pl-[9px]"><T w={67} className="text-[13px] leading-[18px] text-[#777]">Find a setting</T></div>
          <T w={88} className="ml-[12px] mt-[15px] text-[13px] font-semibold leading-[18px] text-[#222]">Network &amp; Intern</T>
          <div className="mt-[19px]"><MiniItems h="h-[38.500px]" /></div>
        </div>
        <div className="flex flex-1 flex-col justify-between pb-[18px] pl-[18px] pt-[37px]">
          <T w={57} className="text-[25px] leading-[34px] text-[#333]">Status</T>
          <div className="flex items-center gap-[12px]">
            <NodeIcon className="size-[20px] text-[#333]" />
            <div className="flex flex-col">
              <T w={141} className="text-[12px] leading-[15px] text-[#333]">Network and Sharing Center</T>
              <T w={239} className="text-[11px] leading-[15px] text-[#888]">For the networks you connect to, decide what you w</T>
            </div>
          </div>
        </div>
      </div>
      <MiniTaskbar />
      <div className="absolute left-[104px] top-[109px] flex h-[474px] w-[441px] flex-col overflow-hidden border border-[#ccc] bg-white">
        <div className="flex h-[23px] items-center pl-[8px]"><NetIcon className="size-[13px]" /><T w={92} className="ml-[5px] text-[12px] leading-[16px] text-[#999]">Network Connections</T></div>
        <div className="ml-[66px] mt-[5px] flex h-[20px] items-center">
          <ArrowUp className="mr-[8px] size-[12px] text-[#555]" />
          <div className="flex h-[20px] flex-1 items-center border border-[#ddd] text-[#333]">
            <NetIcon className="ml-[2px] size-[13px]" /><T w={8} className="mx-[4px] text-[12px] leading-[16px]">«</T>
            <T w={91} className="text-[12px] leading-[16px]">Network and Internet</T><T w={5} className="mx-[6px] text-[12px] leading-[16px]">›</T>
            <T w={93} className="text-[12px] leading-[16px]">Network Connections</T><T w={5} className="mx-[7px] text-[12px] leading-[16px]">›</T>
            <div className="flex-1" /><ChevronDown className="mr-[18px] size-[12px]" /><RotateCw className="size-[10px]" />
          </div>
        </div>
        <div className="mt-[7px] flex h-[22px] shrink-0 items-center bg-[#f6faf8] pl-[13px] text-[#35475c]">
          <T w={50} className="text-[12px] leading-[16px]">Organize ▾</T><T w={115} className="ml-[24px] text-[12px] leading-[16px]">Disable this network device</T>
          <T w={108} className="ml-[24px] text-[12px] leading-[16px]">Diagnose this connection</T><T w={80} className="ml-[23px] text-[12px] leading-[16px]">Rename this conn</T>
        </div>
        <div className="ml-[10px] mt-[10px] flex gap-[6px]"><MiniConn label="Ethernet" /><MiniConn label="Ethernet 2" sel /></div>
        <div className="flex-1" />
        <div className="flex h-[18px] items-center gap-[18px] pl-[11px] text-[#3c4d66]"><T w={31} className="text-[11px] leading-[16px]">2 items</T><T w={63} className="text-[11px] leading-[16px]">1 item selected</T></div>
      </div>
      <div className="absolute bottom-0 right-0 top-[50px] flex w-[277px] flex-col bg-[#0067b8] text-[#d5e8f8]">
        <T w={88} className="ml-[31px] mt-[22px] text-[23px] leading-[34px]">Networks</T>
        <div className="ml-[31px] mt-[17px] flex h-[20px] items-center"><MonitorPlug className="size-[19px]" /><T w={57} className="ml-[12px] text-[13px] font-semibold leading-[18px]">Network 3</T></div>
        <div className="ml-[35px] mt-[34px] flex flex-col text-[13px] leading-[16px]">
          <T w={189}>Do you want to allow your PC to be</T><T w={203}>discoverable by other PCs and devices</T><T w={88}>on this network?</T>
          <T w={199} className="mt-[16px]">We recommend allowing this on your</T><T w={180}>home and work networks, but not</T><T w={63}>public ones.</T>
        </div>
        <div className="ml-[84px] mt-[43px] flex gap-[15px] text-[13px] font-semibold">
          <Box className="h-[29px] w-[74px] border-2 border-[#9fd0f5] bg-[#1683ec]">Yes</Box><Box className="h-[29px] w-[74px] border-2 border-[#9fd0f5]">No</Box>
        </div>
      </div>
    </div>
  );
}

/* ---------- lab guide ---------- */
function Guide() {
  const line = "text-[28px] leading-[38px] text-[#4a4a4a]";
  return (
    <div className="flex w-[951px] shrink-0 flex-col font-['Roboto',sans-serif]">
      <div className="flex h-[112px] shrink-0 items-end bg-[#0173c7] text-[#d9f0ff]">
        <Box className="h-[100px] w-[103px] pl-[2px]">
          <svg className="h-[58px] w-[58px]" viewBox="0 0 58 58" fill="none" stroke="currentColor" strokeWidth="5"><path d="M9 3h40M6 20v-8h46v8M2 26h54M5 26l3 29h42l3-29" /><path d="M20 38h18" strokeWidth="6" /></svg>
        </Box>
        <Box className="h-[100px] w-[101px] bg-[#e4e4e2] text-[#1e252c]">
          <svg className="h-[60px] w-[56px]" viewBox="0 0 56 60"><path d="M1 1h13v58H1z" fill="currentColor" /><path d="M14 3h39v38L38 57H14" fill="none" stroke="currentColor" strokeWidth="4" /><path d="M38 57V43h15z" fill="currentColor" /><path d="M19 14h5M28 14h18M19 23h5M28 23h18M19 32h5M28 32h18" stroke="currentColor" strokeWidth="3.500" /><circle cx="7" cy="15" r="3" fill="#e4e4e2" /><circle cx="7" cy="45" r="3" fill="#e4e4e2" /></svg>
        </Box>
        <Box className="h-[100px] w-[99px]">
          <svg className="h-[58px] w-[54px]" viewBox="0 0 54 58" fill="none" stroke="currentColor" strokeWidth="4.500"><path d="M28 3h23v36L36 55H6V36" /><path d="M36 55V39h15M28 20h12M25 27h15M20 34h20" strokeWidth="3" /><path d="M3 25L16 4c3-4 9-1 7 4L11 29c-3 4-9 0-6-5L15 10M8 27l9-15" strokeWidth="3" /></svg>
        </Box>
        <Box className="h-[100px] w-[100px]"><Settings className="size-[66px]" strokeWidth={2} /></Box>
        <Box className="h-[100px] w-[100px]"><CircleHelp className="size-[78px]" strokeWidth={1.800} /></Box>
      </div>
      <div className="flex h-[247px] shrink-0 flex-col bg-[#e4e4e2] pl-[41px] pt-[22px] text-[#20262b]">
        <T w={620} className="text-[46px] font-semibold leading-[56px]">CompTIA Network+ N10-008</T>
        <T w={504} className="mt-[4px] text-[38px] leading-[50px]">Introduction to the OSI Model</T>
        <T w={821} className="mt-[4px] text-[38px] leading-[43px]">Exercise 3 - Identifying Components Associated</T>
        <T w={599} className="text-[38px] leading-[43px]">with Layers 1 to 3 of the OSI Model</T>
      </div>
      <div className="flex h-[1394px] shrink-0 overflow-hidden">
        <div className="flex w-[917px] shrink-0 flex-col bg-white pl-[41px]">
          <div className="font-['Noto_Sans',sans-serif]"><ShotOne /></div>
          <T w={763} className={line}>Figure 3.32 Screenshot of PLABWIN10: Displaying closing the</T>
          <T w={404} className={line}>Ethernet 2 Properties dialog box.</T>
          <T w={120} className="mt-[28px] text-[38px] font-semibold italic leading-[46px] text-[#333]">Step 11</T>
          <T w={528} className={"mt-[28px] " + line}>In the <b className="text-[#222]">Networks</b> fly-out window, select <b className="text-[#222]">Yes</b>.</T>
          <div className="mt-[28px] font-['Noto_Sans',sans-serif]"><ShotTwo /></div>
          <T w={793} className={line}>Figure 3.33 Screenshot of PLABWIN10: Displaying selecting Yes</T>
        </div>
        <div className="flex w-[34px] flex-col items-center bg-[#f1f1f1]">
          <div className="mt-[14px] border-x-[8px] border-b-[9px] border-x-transparent border-b-[#444]" />
          <div className="mt-[1115px] h-[45px] w-[30px] bg-[#bdbdbd]" />
          <div className="mt-[188px] border-x-[8px] border-t-[9px] border-x-transparent border-t-[#444]" />
        </div>
      </div>
      <div className="flex h-[68px] shrink-0 items-center bg-[#e2e2e2] text-[28px] leading-[40px] text-[#333]">
        <div className="flex h-full w-[102px] items-center bg-[#f0f0f0]"><Box className="w-[34px] pr-[10px]"><ChevronLeft className="size-[46px] text-[#111]" strokeWidth={3} /></Box><T w={52}>Prev</T></div>
        <div className="flex h-full w-[98px] items-center pl-[15px]"><T w={68}>5 of 7</T></div>
        <div className="flex h-full w-[115px] items-center bg-[#f0f0f0] pl-[15px]"><T w={56}>Next</T><Box className="w-[42px]"><ChevronRight className="size-[46px] text-[#111]" strokeWidth={3} /></Box></div>
        <div className="flex h-full w-[119px] items-center border-l-2 border-[#dcdcdc] bg-[#f0f0f0] pl-[15px]"><T w={44}>Top</T><Box className="w-[58px]"><ChevronUp className="size-[46px] text-[#111]" strokeWidth={3} /></Box></div>
        <div className="flex h-full w-[151px] items-center border-l-2 border-[#dcdcdc] bg-[#f0f0f0] pl-[15px]"><T w={62}>Done</T><Box className="ml-[11px] size-[52px] rounded-full bg-[#c93f3a]"><X className="size-[38px] text-white" strokeWidth={4} /></Box></div>
        <div className="flex-1" />
        <Box className="h-full w-[67px] border-l-2 border-[#d0d0d0] bg-[#ececec] pr-[4px]"><Printer className="size-[48px] text-[#222]" strokeWidth={2.200} /></Box>
        <Box className="h-full w-[68px] border-l-2 border-[#d0d0d0] bg-[#ececec]">
          <svg className="h-[46px] w-[42px]" viewBox="0 0 42 46" fill="none" stroke="#222" strokeWidth="3.500"><path d="M4 8c4-6 14-8 17-5L10 14c-4 2-7-2-6-6zM10 14l10 22M24 3l4 8 9 20c2 6-4 8-8 5L16 42c-4 3-8-2-5-6l8-4" /><path d="M17 18l10-5M20 24l10-5" strokeWidth="2.500" /></svg>
        </Box>
      </div>
    </div>
  );
}

/* ---------- virtual machine list ---------- */
const Drive = ({ dim }) => (
  <svg className="h-[30px] w-[44px]" viewBox="0 0 44 30" fill={dim ? "#858585" : "#fff"}><path d="M9 0h26l6 15H3z" /><path d="M0 17h44v13H0z" /><path d="M28 23h8" stroke="#555" strokeWidth="2.500" /></svg>
);
const ServerBook = () => (
  <svg className="h-[48px] w-[44px]" viewBox="0 0 44 48" fill="none" stroke="#f0f0f0" strokeWidth="3"><path d="M2 3l20 5 20-5v28l-20 4-20-4zM22 8v27M22 36v6M7 10l10 3v16L7 27zM37 10l-10 3v16l10-2zM7 18l10 2M37 18l-10 2" /><path d="M5 45h34" strokeWidth="3.500" /></svg>
);
const WinDisc = () => (
  <svg className="h-[48px] w-[40px]" viewBox="0 0 40 48"><circle cx="20" cy="18" r="16" fill="none" stroke="#f0f0f0" strokeWidth="3" /><path d="M11 13l8-1v6h-8zM20 12l9-2v8h-9zM11 19h8v6l-8-1zM20 19h9v8l-9-2z" fill="#fff" /><path d="M20 34v8M2 45h36" stroke="#f0f0f0" strokeWidth="3.500" /></svg>
);
function Vm({ name, w, on, icon, h, bg = "", children }) {
  return (
    <div className={"flex shrink-0 flex-col border-b-2 border-[#676767] " + h + " " + bg}>
      <T w={w} className="ml-[11px] pt-[2px] text-[28px] leading-[59px] text-[#ececec]">{name}</T>
      <div className="flex items-center">
        <Box className="h-[46px] w-[67px]">{icon}</Box>
        <Box className={on ? "h-[46px] w-[124px] border-2 border-[#b9d4b9] bg-[#338735] text-[27px] text-white" : "h-[46px] w-[124px] border-2 border-[#c4c4c4] text-[27px] text-white"}>{on ? "On" : "Off"}</Box>
      </div>
      {children}
    </div>
  );
}
function VmAct({ icon, label, w }) {
  return <div className="flex h-[40px] items-center text-[#f0f0f0]"><Box className="ml-[4px] w-[61px]">{icon}</Box><T w={w} className="text-[28px] leading-[40px]">{label}</T></div>;
}
function VmBar() {
  return (
    <div className="flex w-[205px] shrink-0 flex-col bg-[#4a4a4a] font-['Roboto',sans-serif]">
      <div className="flex h-[104px] shrink-0 border-b-2 border-[#676767]">
        <div className="flex w-[102px] flex-col items-center gap-[11px] border-r-2 border-[#676767] pt-[30px]">
          <div className="h-[6px] w-[52px] bg-white" /><div className="h-[6px] w-[52px] bg-white" /><div className="h-[6px] w-[52px] bg-white" />
        </div>
        <div className="pl-[15px] pt-[25px]">
          <svg className="h-[54px] w-[72px]" viewBox="0 0 72 54" fill="none" stroke="#eee"><rect x="1" y="1" width="70" height="52" strokeWidth="2" /><rect x="8" y="8" width="56" height="38" strokeWidth="4" /><path d="M14 20v-7h8M50 13h8v7M58 34v7h-8M22 41h-8v-7" strokeWidth="3" /></svg>
        </div>
      </div>
      <Vm name="PLABWEB01" w={154} on icon={<Drive />} h="h-[119px]" />
      <Vm name="PLABDC01" w={133} on icon={<ServerBook />} h="h-[119px]" />
      <Vm name="PLABWIN10" w={151} on icon={<WinDisc />} h="h-[358px]" bg="bg-[#666]">
        <div className="mt-[13px] flex flex-col">
          <VmAct icon={<Power className="size-[28px]" />} label="Power off" w={119} />
          <VmAct icon={<Loader className="size-[28px]" />} label="Reboot" w={87} />
          <VmAct icon={<Undo2 className="size-[28px]" strokeWidth={3.500} />} label="Reset" w={68} />
          <VmAct icon={<CirclePause className="size-[28px]" />} label="Suspend" w={107} />
          <VmAct icon={<svg className="h-[28px] w-[28px]" viewBox="0 0 28 28" fill="none" stroke="currentColor" strokeWidth="2.500"><path d="M12 19H2V3h24v12M6 24h9M7 10l3-3 3 4" /><circle cx="18" cy="16" r="5" /><path d="M22 20l5 6" /></svg>} label="Refresh" w={95} />
        </div>
        <div className="mt-[9px] flex justify-center pr-[2px]"><div className="border-x-[14px] border-b-[15px] border-x-transparent border-b-white" /></div>
      </Vm>
      <Vm name="PLABDM01" w={138} icon={<Drive dim />} h="h-[119px]" />
      <Vm name="PFSENSE" w={117} on icon={<ServerBook />} h="h-[119px]" />
      <Vm name="PLABKALI" w={124} icon={<Drive dim />} h="h-[120px]" />
      <div className="flex-1" />
      <div className="flex h-[258px] shrink-0 flex-col items-center border-t-2 border-[#676767] pt-[17px] text-[#f0f0f0]">
        <T w={115} className="text-[22px] leading-[30px]">Auto logout</T>
        <T w={107} className="text-[28px] leading-[32px]">40 mins.</T>
        <div className="mt-[2px] h-[10px] w-[184px] shrink-0 bg-[#777]"><div className="h-[10px] w-[123px] bg-white" /></div>
        <div className="mt-[29px] flex h-[50px] items-center">
          <Box className="w-[68px]"><Power className="size-[42px]" strokeWidth={2.500} /></Box>
          <Box className="w-[68px]"><svg className="h-[42px] w-[42px]" viewBox="0 0 42 42" fill="none" stroke="#f0f0f0" strokeWidth="5"><path d="M34 34A17 17 0 1 1 33 9" /><path d="M38 1v16H23z" fill="#f0f0f0" stroke="none" /></svg></Box>
          <Box className="w-[68px]"><svg className="h-[36px] w-[42px]" viewBox="0 0 42 36" fill="#fff"><path d="M14 1h28v26l-6 8V7H18v6h-4z" /><path d="M0 14h14V7l16 12-16 13v-7H0z" /></svg></Box>
        </div>
        <div className="mt-[28px] flex h-[40px] self-stretch pl-[14px]">
          <svg className="h-[38px] w-[22px]" viewBox="0 0 22 38"><path d="M0 2l9-2v38H0z" fill="#fff" /><path d="M11 18l7 3v17h-7z" fill="#e4e4e4" /></svg>
          <div className="ml-[15px] flex flex-col"><T w={58} className="text-[12px] leading-[14px] text-[#ccc]">Powered by</T><T w={136} className="text-[24px] leading-[28px]">Practice Labs</T></div>
        </div>
      </div>
    </div>
  );
}

/* ---------- remote desktop ---------- */
function SetItem({ icon, label, w, active }) {
  return (
    <div className="flex h-[96px] shrink-0 items-center text-[#333]">
      <div className={active ? "h-[48px] w-[8px] bg-[#1672b8]" : "h-[48px] w-[8px]"} />
      <Box className="w-[77px] pb-[4px]">{icon}</Box>
      <T w={w} className="ml-[8px] text-[28px] leading-[44px]">{label}</T>
    </div>
  );
}
function Conn({ label, w, sel }) {
  return (
    <div className={sel ? "flex h-[104px] w-[499px] bg-[#dcdcdc] pl-[12px] pt-[3px]" : "flex h-[104px] w-[499px] pl-[13px] pt-[3px]"}>
      <Pc className="mr-[13px] h-[92px] w-[90px]" />
      <div className="flex flex-col text-[25px] leading-[32px] text-[#808080]">
        <T w={w} className="text-[#2b2b2b]">{label}</T>
        <T w={221}>PRACTICELABS.COM</T>
        <T w={371}>Microsoft Hyper-V Network Adap...</T>
      </div>
    </div>
  );
}
function ConnWindow() {
  return (
    <div className="absolute left-[514px] top-[177px] flex h-[1188px] w-[1353px] flex-col border-b-[5px] border-l-2 border-t-2 border-[#b4b4b4] border-b-[#e3e3e3] bg-white">
      <div className="flex h-[58px] shrink-0 items-center">
        <Box className="w-[58px] pl-[3px]"><NetIcon className="h-[34px] w-[31px]" /></Box>
        <T w={229} className="text-[26px] leading-[40px] text-[#999]">Network Connections</T>
        <div className="flex-1" />
        <div className="h-[3px] w-[20px] bg-[#aaa]" />
      </div>
      <div className="mt-[12px] flex h-[58px] shrink-0 items-center">
        <Box className="w-[72px]"><ArrowLeft className="size-[26px] text-[#d5d5d5]" /></Box>
        <Box className="w-[50px]"><ArrowRight className="size-[26px] text-[#d5d5d5]" /></Box>
        <Box className="w-[42px]"><ChevronDown className="size-[14px] text-[#d5d5d5]" /></Box>
        <Box className="mr-[5px] w-[42px]"><ArrowUp className="size-[30px] text-[#555]" /></Box>
        <div className="flex h-[58px] w-[904px] items-center border-2 border-[#dfdfdf] text-[25px] leading-[38px] text-[#333]">
          <Box className="w-[42px]"><NetIcon className="h-[34px] w-[31px]" /></Box>
          <Box className="w-[36px] pb-[6px] pr-[8px]"><T w={17}>«</T></Box>
          <T w={224}>Network and Internet</T>
          <Box className="w-[46px]">›</Box>
          <T w={230}>Network Connections</T>
          <Box className="w-[46px]">›</Box>
          <div className="flex-1" />
          <Box className="w-[64px]"><ChevronDown className="size-[24px] text-[#666]" strokeWidth={2.500} /></Box>
          <Box className="h-[54px] w-[66px] border-l-2 border-[#dfdfdf]">
            <svg className="h-[26px] w-[22px]" viewBox="0 0 22 26" fill="none" stroke="#666" strokeWidth="2.800"><path d="M15 6a9 9 0 1 1-9 1M5 2v7h8" /></svg>
          </Box>
        </div>
        <div className="ml-[24px] h-[58px] flex-1 border-2 border-r-0 border-[#dfdfdf]" />
      </div>
      <div className="mt-[17px] flex h-[60px] shrink-0 items-center bg-[#f6faf8] pb-[4px] pl-[36px] text-[25px] leading-[40px] text-[#35475c]">
        <T w={93}>Organize</T>
        <Box className="w-[38px]"><div className="border-x-[8px] border-t-[10px] border-x-transparent border-t-[#35475c]" /></Box>
        <T w={286} className="ml-[50px]">Disable this network device</T>
        <T w={269} className="ml-[59px]">Diagnose this connection</T>
        <T w={255} className="ml-[60px]">Rename this connection</T>
        <T w={17} className="ml-[46px]">»</T>
        <div className="flex-1" />
        <svg className="h-[32px] w-[28px]" viewBox="0 0 28 32"><rect x="1" y="1" width="17" height="30" fill="#eef1e6" stroke="#999" strokeWidth="2" /><rect x="4" y="4" width="11" height="9" fill="#8cc2e8" /><path d="M4 26l6-9 5 9z" fill="#c9b23c" /><path d="M22 8h6M22 20h6" stroke="#777" strokeWidth="3" /></svg>
      </div>
      <div className="ml-[24px] mt-[12px] flex gap-[12px]">
        <Conn label="Ethernet" w={87} />
        <Conn label="Ethernet 2" w={105} sel />
      </div>
      <div className="flex-1" />
      <div className="flex h-[42px] shrink-0 items-center pl-[27px] text-[25px] leading-[38px] text-[#3c4d66]">
        <T w={76}>2 items</T><T w={156} className="ml-[42px]">1 item selected</T>
      </div>
    </div>
  );
}
function Flyout() {
  return (
    <div className="absolute right-0 top-0 flex h-[1595px] w-[685px] flex-col bg-[#0067b8] text-[#d3eafc]">
      <T w={216} className="ml-[79px] mt-[53px] text-[54px] leading-[80px]">Networks</T>
      <div className="ml-[81px] mt-[51px] flex h-[50px] items-center">
        <MonitorPlug className="h-[38px] w-[44px]" />
        <T w={140} className="ml-[31px] text-[29px] font-semibold leading-[44px]">Network 3</T>
      </div>
      <div className="ml-[88px] mt-[84px] flex flex-col text-[30px] leading-[40px]">
        <T w={470}>Do you want to allow your PC to be</T>
        <T w={504}>discoverable by other PCs and devices</T>
        <T w={219}>on this network?</T>
        <T w={495} className="mt-[40px]">We recommend allowing this on your</T>
        <T w={448}>home and work networks, but not</T>
        <T w={158}>public ones.</T>
      </div>
      <div className="ml-[211px] mt-[110px] flex gap-[39px]">
        <Box className="relative h-[67px] w-[181px] border-4 border-[#9ccff5] bg-[#0078d7]">
          <T w={44} className="text-[28px] font-semibold leading-[44px]">Yes</T>
          <svg className="absolute left-[134px] top-[-8px] h-[42px] w-[26px]" viewBox="0 0 26 42"><path d="M2 2v31l7-7 5 13 6-3-5-12h9z" fill="#fff" stroke="#1f2a55" strokeWidth="2.500" /></svg>
        </Box>
        <Box className="h-[67px] w-[182px] border-4 border-[#9ccff5]"><T w={40} className="text-[28px] font-semibold leading-[44px]">No</T></Box>
      </div>
    </div>
  );
}
function RemoteTaskbar() {
  return (
    <div className="flex h-[78px] w-[1867px] shrink-0 items-center bg-[#060e16]">
      <Box className="w-[95px] pr-[2px]"><FaWindows className="size-[35px] text-white" /></Box>
      <div className="flex h-[78px] w-[688px] items-center border-b-[3px] border-[#bbb] bg-[#f6f6f6]">
        <Box className="w-[81px]">
          <svg className="h-[36px] w-[34px]" viewBox="0 0 34 36" fill="none" stroke="#555" strokeWidth="2.800"><circle cx="21" cy="13" r="11" /><path d="M13 21L2 34" /></svg>
        </Box>
        <T w={254} className="text-[29px] leading-[44px] text-[#555]">Type here to search</T>
      </div>
      <Box className="w-[96px]"><div className="size-[31px] rounded-full border-[4px] border-[#dfe3e6]" /></Box>
      <Box className="w-[94px]"><TaskView className="h-[31px] w-[34px]" /></Box>
      <Box className="w-[110px]"><EdgeIcon className="size-[48px]" /></Box>
      <Box className="w-[86px]"><FolderIcon className="h-[35px] w-[43px]" /></Box>
      <div className="ml-[15px] flex h-[78px] w-[80px] flex-col items-center border-b-[4px] border-[#7b8e9c] pt-[18px]">
        <svg className="size-[38px]" viewBox="0 0 38 38" fill="none" stroke="#fff"><circle cx="19" cy="19" r="11" strokeWidth="5" /><circle cx="19" cy="19" r="16" strokeWidth="5" strokeDasharray="6.280 6.280" /></svg>
      </div>
      <div className="ml-[19px] flex h-[78px] w-[80px] flex-col items-center border-b-[4px] border-[#7b8e9c] pt-[22px]"><Panel className="h-[32px] w-[42px]" /></div>
    </div>
  );
}
const barCell = "h-[73px] border-l-2 border-[#424242] pb-[6px] ";
function Remote() {
  return (
    <div className="flex min-w-0 flex-1 flex-col bg-[#1a1a1a] pl-[30px] pt-[30px]">
      <div className="flex h-[73px] shrink-0 items-center bg-[#4a4a4a] text-[#eee]">
        <T w={180} className="ml-[18px] pb-[6px] font-['DejaVu_Sans_Mono',monospace] text-[29px] leading-[44px] [-webkit-text-stroke:0.8px_#eee]">PLABWIN10</T>
        <div className="flex-1" />
        <Box className={barCell + "w-[169px]"}>
          <svg className="h-[42px] w-[44px]" viewBox="0 0 44 42" fill="none" stroke="currentColor" strokeWidth="3"><path d="M22 30C14 20 13 17 13 12a9 9 0 0 1 18 0c0 5-1 8-9 18z" /><circle cx="22" cy="12" r="3.500" /><path d="M13 26H8L2 39h40l-6-13h-5M15 39l3-7M29 39l-3-7" /></svg>
          <T w={81} className="ml-[13px] font-['Liberation_Sans',sans-serif] text-[27px] leading-[40px]">ATL03</T>
        </Box>
        <Box className={barCell + "w-[75px]"}><svg className="h-[26px] w-[46px]" viewBox="0 0 46 26" fill="none" stroke="currentColor" strokeWidth="3.200"><path d="M25 9H5l-3 4 4 4h6l3-2 3 2 3-2h4a10 10 0 1 0 0-6z" /><circle cx="35" cy="12" r="3" /></svg></Box>
        <Box className={barCell + "w-[74px]"}><svg className="h-[36px] w-[46px]" viewBox="0 0 46 36" fill="none" stroke="currentColor" strokeWidth="3.200"><path d="M24 30H2V2h38v12M28 23l7 6-7 6M45 16l-6 6 6 6" /></svg></Box>
        <Box className={barCell + "w-[74px]"}><svg className="h-[40px] w-[44px]" viewBox="0 0 44 40" fill="none" stroke="currentColor" strokeWidth="3.400"><path d="M8 20a17 17 0 1 1 5 12M1 17l7 6 7-6M25 14v12M19 20h12" /></svg></Box>
        <Box className={barCell + "w-[73px]"}><Box className="size-[43px] rounded-full border-[3px] border-[#eee] font-['Liberation_Serif',serif] text-[34px] font-bold italic leading-[34px]">i</Box></Box>
        <Box className={barCell + "w-[67px] pl-[6px]"}>
          <svg className="h-[36px] w-[44px]" viewBox="0 0 44 36" fill="none" stroke="currentColor" strokeWidth="3.200"><path d="M2 19C10 5 34 3 42 15 35 30 11 33 2 19z" /><circle cx="22" cy="18" r="6" /><path d="M37 2L9 34" /></svg>
        </Box>
      </div>
      <div className="relative flex h-[1595px] shrink-0 flex-col">
        <div className="flex h-[1518px] shrink-0">
          <div className="flex w-[638px] shrink-0 flex-col bg-[#e5eae6]">
            <T w={85} className="ml-[27px] mt-[10px] text-[24px] leading-[40px] text-[#333]">Settings</T>
            <div className="mt-[63px] flex h-[60px] items-center">
              <Box className="w-[95px]"><House className="size-[31px] text-[#333]" /></Box>
              <T w={74} className="text-[29px] leading-[44px] text-[#333]">Home</T>
            </div>
            <div className="ml-[30px] mt-[32px] flex h-[63px] items-center border-4 border-[#a4a4a4] bg-[#f6f6f6] pb-[2px] pl-[22px]">
              <T w={165} className="text-[28px] leading-[44px] text-[#777]">Find a setting</T>
            </div>
            <T w={244} className="ml-[32px] mt-[31px] text-[29px] font-semibold leading-[60px] text-[#2a2a2a]">Network &amp; Internet</T>
            <div className="mt-[39px] flex flex-col">
              <SetItem active icon={<StatusGlobe className="h-[31px] w-[33px]" />} label="Status" w={75} />
              <SetItem icon={<MonitorPlug className="h-[26px] w-[34px]" />} label="Ethernet" w={103} />
              <SetItem icon={<DialUp className="h-[26px] w-[30px]" />} label="Dial-up" w={91} />
              <SetItem icon={<VpnIcon className="h-[22px] w-[33px]" />} label="VPN" w={54} />
              <SetItem icon={<Globe className="size-[36px]" />} label="Proxy" w={69} />
            </div>
          </div>
          <div className="flex flex-1 flex-col bg-white">
            <T w={141} className="ml-[46px] mt-[100px] text-[57px] leading-[80px] text-[#2f2f2f]">Status</T>
            <div className="flex-1" />
            <div className="mb-[22px] flex items-center">
              <Box className="w-[121px] pb-[8px] pl-[20px]">
                <svg className="h-[48px] w-[44px]" viewBox="0 0 46 48" fill="none" stroke="#2a2a2a" strokeWidth="3.500"><path d="M10 7V2h33v26h-4" /><path d="M3 8h34v22H3zM20 30v7M3 44h10M27 44h14" /><path d="M13 47v-5l7-5 7 5v5z" /></svg>
              </Box>
              <div className="flex flex-col leading-[40px]">
                <T w={297} className="text-[28px] text-[#333]">Change adapter options</T>
                <T w={639} className="text-[26px] text-[#808080]">View network adapters and change connection settings.</T>
              </div>
            </div>
          </div>
        </div>
        <RemoteTaskbar />
        <ConnWindow />
        <div className="absolute left-[1173px] top-[47px] flex gap-[9px] font-['Roboto',sans-serif] text-white">
          <div className="flex h-[56px] w-[207px] items-center rounded-[3px] bg-[#316bca]">
            <Box className="ml-[15px] size-[32px] flex-col gap-[4px] rounded-full bg-white"><div className="h-[3px] w-[16px] bg-[#316bca]" /><div className="h-[3px] w-[16px] bg-[#316bca]" /><div className="h-[3px] w-[16px] bg-[#316bca]" /></Box>
            <T w={79} className="ml-[32px] text-[31px] font-medium leading-[44px]">Menu</T>
            <div className="ml-[9px] border-x-[6px] border-t-[11px] border-x-transparent border-t-white" />
          </div>
          <Box className="h-[56px] w-[55px] rounded-[3px] bg-[#316bca]"><Wifi className="size-[42px] text-[#42e07a]" strokeWidth={2.600} /></Box>
        </div>
        <Flyout />
      </div>
      <div className="flex h-[60px] items-start justify-end pr-[26px] text-[#858585]">
        <svg className="mr-[2px] h-[28px] w-[44px]" viewBox="0 0 44 29" fill="currentColor"><path d="M0 0h16l6 5 6-5h16c1 10-9 20-22 29C9 20-1 10 0 0z" /></svg>
        <T w={276} className="font-['Lato',sans-serif] text-[74px] leading-[46px] [-webkit-text-stroke:2px_#858585]">percipio.</T>
      </div>
    </div>
  );
}

/* ---------- host taskbar and player ---------- */
const Chrome = () => (
  <svg className="size-[48px]" viewBox="0 0 48 48"><circle cx="24" cy="24" r="23" fill="#2fa352" /><path d="M3 14C12-4 38-3 46 15H24z" fill="#db4437" /><path d="M46 15c4 16-5 30-20 32l9-20z" fill="#f4c20d" /><circle cx="24" cy="24" r="10" fill="#fff" /><circle cx="24" cy="24" r="7.500" fill="#4285f4" /></svg>
);
function HostTaskbar() {
  const tiles = [
    <div className="size-[40px] bg-[#f5f5f5]" />,
    <div className="size-[46px] rounded-[6px] border-4 border-[#ecf6e4] bg-[#6cbf3f]" />,
    <div className="size-[42px] rounded-full bg-linear-to-br from-[#28a7d8] to-[#8e5fd6]" />,
    <FolderIcon className="h-[40px] w-[48px]" />, <EdgeIcon className="size-[46px]" />,
    <div className="mt-[2px] size-[42px] border-t-[8px] border-[#3a8fc4] bg-[#f3f3f3]" />,
    <FaSpotify className="size-[46px] text-[#1fc45c]" />,
    <div className="size-[42px] bg-[#f4d73b]" />,
    <div className="size-[46px] border-t-[6px] border-[#aaa] bg-[#222]" />,
    <div className="flex"><div className="size-[42px] rounded-full border-[5px] border-[#444] bg-[#eee]" /><div className="-ml-[12px] -mt-[10px] h-[34px] w-[28px] rounded-full bg-[#2b9de0]" /></div>,
    <Chrome />, <div className="size-[44px] border-t-[12px] border-[#b7312e] bg-[#e8474c]" />,
    <div className="size-[44px] rounded-full border-[9px] border-[#d23c50] bg-[#f5f5f5]" />,
    <div className="size-[42px] rounded-full border-[6px] border-[#eee]" />,
    <div className="size-[44px] rounded-full border-[9px] border-[#9a4bc2]" />,
    <div className="-mt-[16px] flex h-[60px] w-[76px] rounded-[6px] bg-[#b85a5a] pt-[18px]"><div className="ml-[14px] size-[42px] rounded-full bg-[#2aa0da]" /><span className="-ml-[12px] bg-[#e0503f] text-[15px] leading-[18px] text-white">161</span></div>,
    <FaDiscord className="size-[46px] text-[#7a83f0]" />,
    <div className="mt-[4px] size-[44px] border-t-[8px] border-[#ddd] bg-[#444]" />,
    <svg className="mt-[4px] h-[40px] w-[44px]" viewBox="0 0 44 40"><path d="M4 0h40l-4 40H0z" fill="#12a6b8" /><path d="M14 4l14 14-16 18" fill="none" stroke="#7fe8e8" strokeWidth="4" /></svg>,
    <div className="size-[48px] border-l-[20px] border-[#175fae] bg-[#2da3ef]" />,
    <div className="flex"><div className="size-[42px] rounded-full border-[3px] border-[#ccc]" /><div className="-ml-[16px] -mt-[8px] h-[26px] w-[25px] rounded-full bg-[#f30c0c]" /></div>,
    <svg className="size-[46px]" viewBox="0 0 46 46"><path d="M34 0l12 6v40H34L2 16l5-5 27 20z" fill="#1f8ad2" /><path d="M34 0v14L8 36l-6-5z" fill="#2ba2ee" /></svg>,
    <svg className="mt-[1px] h-[44px] w-[42px]" viewBox="0 0 42 44"><path d="M0 0h42l-4 40H6z" fill="#e4e4ee" /><path d="M4 4h15l14 40H8z" fill="#1b1fae" /></svg>,
  ];
  return (
    <div className="flex h-[42px] shrink-0 items-start overflow-hidden border-t-2 border-[#4a3f3a] bg-linear-to-r from-[#2f1c14] via-[#2a1d1a] via-30% to-[#212021]">
      <div className="flex w-[649px] shrink-0 items-start pt-[8px]">
        <div className="ml-[28px] mt-[12px] h-[30px] w-[40px] rounded-tl-[20px] bg-[#9fb4e6]" />
        <Box className="-ml-[15px] mt-[2px] size-[30px] rounded-full bg-[#bf2c26] text-[19px] font-semibold text-white">1</Box>
        <T w={43} className="ml-[10px] text-[23px] leading-[34px] text-[#eee]">11°C</T>
      </div>
      <div className="mt-[24px] flex w-[48px] shrink-0 gap-[3px]"><div className="h-[24px] flex-1 bg-[#43bdec]" /><div className="h-[24px] flex-1 bg-[#43bdec]" /></div>
      <div className="ml-[30px] mt-[16px] flex h-[60px] w-[434px] shrink-0 items-start rounded-[22px] bg-[#f4f1ee] pl-[22px] pt-[12px]">
        <Search className="size-[26px] -scale-x-100 text-[#222]" strokeWidth={3} />
        <T w={76} className="ml-[24px] text-[26px] leading-[36px] text-[#666]">Search</T>
        <div className="ml-[200px] size-[30px] rotate-45 bg-[#77752e]" />
      </div>
      <div className="ml-[14px] flex shrink-0">
        {tiles.map((t, i) => <div key={i} className="mt-[21px] flex h-[60px] w-[87.500px] items-start justify-center">{t}</div>)}
      </div>
      <div className="ml-[180px] mt-[22px] flex shrink-0 items-start text-[#ddd]">
        <ChevronUp className="mt-[8px] size-[26px]" /><Cloud className="ml-[29px] size-[34px] fill-[#aaa]" /><div className="ml-[46px] h-[30px] w-[12px] rounded-t-full border-[3px] border-[#5aa9a5]" /><Wifi className="ml-[39px] size-[34px]" /><Volume2 className="ml-[16px] size-[34px]" />
        <T w={26} className="-mt-[14px] ml-[98px] text-[23px] leading-[30px]">19</T>
      </div>
    </div>
  );
}
function Player() {
  const btn = "border-2 border-b-0 border-[#b0aeae] rounded-t-[6px] shrink-0 ";
  return (
    <div className="absolute left-[1107px] top-[2007px] flex h-[79px] w-[1600px] flex-col bg-[#dddddd]/88 font-['DejaVu_Sans_Condensed','DejaVu_Sans',sans-serif] text-[21px] leading-[24px] text-black">
      <div className="flex h-[58px] shrink-0 items-center">
        <div className="pt-[4px]"><T w={56} className="ml-[46px]">41:59</T></div>
        <div className="ml-[33px] h-[19px] w-[1335px] rounded-[6px] bg-linear-to-b from-[#969696] to-[#b2b2b2] pt-[2px]"><div className="h-[16px] w-[799px] rounded-[6px] bg-linear-to-b from-[#2a77c2] to-[#2466a4]" /></div>
        <div className="pt-[4px]"><T w={73} className="ml-[34px]">1:10:07</T></div>
      </div>
      <div className="flex items-start overflow-hidden">
        <div className={btn + "ml-[9px] mt-[3px] h-[24px] w-[61px] bg-[#dcdcdc]/50 pl-[16px] pt-[8px]"}><div className="border-y-[12px] border-l-[16px] border-y-transparent border-l-[#555]" /></div>
        <div className={btn + "ml-[40px] mt-[9px] h-[20px] w-[48px]"} />
        <div className={btn + "ml-[16px] mt-[9px] h-[20px] w-[48px]"} />
        <div className={btn + "ml-[16px] mt-[9px] h-[20px] w-[48px]"} />
        <div className={btn + "ml-[100px] mt-[9px] h-[20px] w-[48px]"} />
        <div className={btn + "ml-[714px] mt-[9px] h-[20px] w-[48px]"} />
      </div>
    </div>
  );
}

export default function App() {
  return (
    <div className="relative flex h-[2086px] w-[3758px] flex-col overflow-hidden bg-white font-['Noto_Sans',sans-serif]">
      <TabStrip />
      <Toolbar />
      <Bookmarks />
      <div className="flex h-[3px] shrink-0 bg-[#bdbdbd]"><div className="w-[951px] bg-[#a5d4f5]" /></div>
      <div className="flex h-[1823px] shrink-0">
        <Guide />
        <div className="flex w-[20px] shrink-0 flex-col bg-[#646464] pt-[864px]"><div className="mx-[4px] h-[94px] bg-[#757575]" /></div>
        <VmBar />
        <Remote />
      </div>
      <HostTaskbar />
      <Player />
    </div>
  );
}
